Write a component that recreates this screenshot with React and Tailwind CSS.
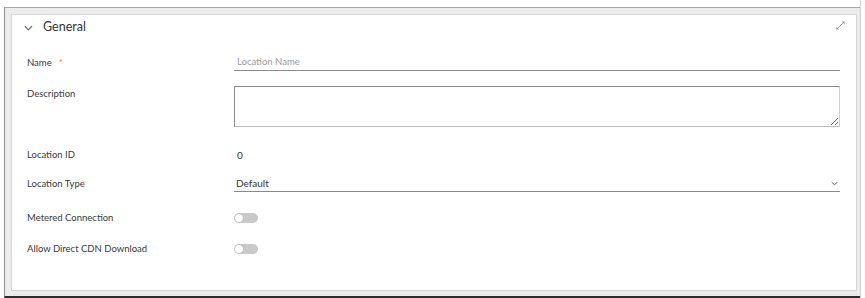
import React from "react";

const font = { fontFamily: "Lato, 'Open Sans', sans-serif" };

function Toggle() {
  return (
    <div className="relative h-[10px] w-[24px] rounded-full bg-[#c9c9c9]">
      <div className="absolute left-[1px] top-[1px] h-[8px] w-[8px] rounded-full bg-white shadow-[0_0_1px_rgba(0,0,0,0.3)]" />
    </div>
  );
}

function Chevron({ className }) {
  return (
    <svg viewBox="0 0 10 6" className={className} fill="none" stroke="currentColor" strokeWidth="1.2">
      <path d="M1 1l4 4 4-4" />
    </svg>
  );
}

function ExpandIcon() {
  return (
    <svg viewBox="0 0 10 10" className="h-[9px] w-[9px] text-[#8a8a8a]" fill="currentColor">
      <path d="M6.5 0.5h3v3z" />
      <path d="M0.5 6.5v3h3z" />
      <path d="M8 2L2 8" stroke="currentColor" strokeWidth="0.8" />
    </svg>
  );
}

function Label({ children, required }) {
  return (
    <div className="w-[207px] shrink-0 text-[9.5px] leading-[16px] text-[#3a3a3a]">
      {children}
      {required && <span className="ml-[7px] text-[#f07b3f]">*</span>}
    </div>
  );
}

export default function App() {
  return (
    <div style={font} className="h-[298px] w-[865px] overflow-hidden bg-white">
      <div className="h-[298px] w-[861px] border-r border-[#cfcfcf] pt-[7px] pl-[4px]">
        <div className="h-[291px] border-l border-t border-b-2 border-l-[#8f8f8f] border-t-[#a8a8a8] border-b-[#2b2b2b] bg-[#ececec] pt-[6px] pb-[5px] pl-[6px] pr-[3px]">
          <div className="flex h-full flex-col border border-[#d6d6d6] bg-white pl-[15px] pr-[16px]">
            {/* header */}
            <div className="flex h-[25px] items-center">
              <Chevron className="ml-[-3px] h-[6px] w-[9px] text-[#555]" />
              <span className="ml-[10px] text-[12.5px] text-[#333]">General</span>
              <div className="ml-auto mr-[-5px] mt-[-4px]">
                <ExpandIcon />
              </div>
            </div>

            {/* name */}
            <div className="mt-[14px] flex h-[17px] items-center">
              <Label required>Name</Label>
              <div className="flex h-[17px] flex-1 items-center border-b border-[#8a8a8a] pl-[3px] text-[9.5px] text-[#9a9a9a]">
                Location Name
              </div>
            </div>

            {/* description */}
            <div className="mt-[15px] flex">
              <Label>Description</Label>
              <textarea
                className="h-[41px] flex-1 border border-t-[#8a8a8a] border-l-[#8a8a8a] border-r-[#cfcfcf] border-b-[#bdbdbd] bg-white outline-none"
                readOnly
              />
            </div>

            {/* location id */}
            <div className="mt-[20px] flex h-[16px] items-center">
              <Label>Location ID</Label>
              <div className="pl-[3px] text-[10px] text-[#333]">0</div>
            </div>

            {/* location type */}
            <div className="mt-[13px] flex h-[16px] items-center">
              <Label>Location Type</Label>
              <div className="flex h-[16px] flex-1 items-center border-b border-[#8a8a8a] pl-[2px] text-[10px] text-[#333]">
                Default
                <Chevron className="ml-auto mr-[2px] h-[5px] w-[7px] text-[#444]" />
              </div>
            </div>

            {/* metered */}
            <div className="mt-[18px] flex h-[16px] items-center">
              <Label>Metered Connection</Label>
              <Toggle />
            </div>

            {/* cdn */}
            <div className="mt-[15px] flex h-[16px] items-center">
              <Label>Allow Direct CDN Download</Label>
              <Toggle />
            </div>
          </div>
        </div>
      </div>
    </div>
  );
}
